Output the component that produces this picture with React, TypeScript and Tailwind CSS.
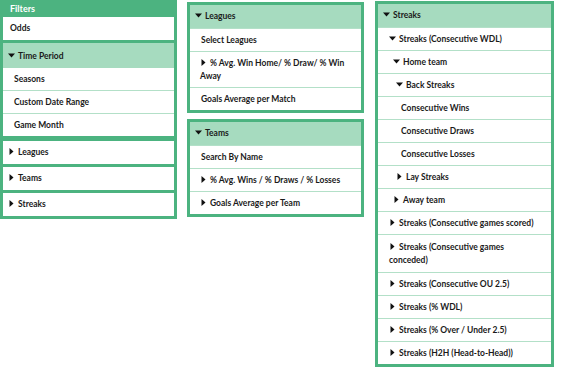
import type { ReactNode } from 'react';

function Arrow({ open }: { open: boolean }) {
  return (
    <span className="inline-block w-[7px] mr-[3px] align-middle relative -top-[1px]">
      {open ? (
        <svg width="7" height="5" viewBox="0 0 7 5" className="block">
          <polygon points="0,0.5 7,0.5 3.5,4.5" fill="#111" />
        </svg>
      ) : (
        <svg width="7" height="7" viewBox="0 0 7 7" className="block">
          <polygon points="1.5,0 5.5,3.5 1.5,7" fill="#111" />
        </svg>
      )}
    </span>
  );
}

type Item = { label: string; pl: string; arrow?: 'open' | 'closed'; tall?: boolean };

function Row({ item, first }: { item: Item; first?: boolean }) {
  return (
    <div
      className={
        (first ? '' : 'border-t border-[#b3e0c8] ') +
        (item.tall ? 'pt-[6px] pb-[5px] ' : 'pt-[5px] pb-[4px] ') +
        'bg-white pr-[11px] leading-[13px] ' +
        item.pl
      }
    >
      {item.arrow && <Arrow open={item.arrow === 'open'} />}
      {item.label}
    </div>
  );
}

function Box({ title, items, className }: { title: string; items: Item[]; className?: string }) {
  return (
    <div className={'border-[3px] border-[#4cb380] ' + (className ?? '')}>
      <div className="bg-[#a6dbbf] pl-[5px] pt-[5px] pb-[5px] leading-[13px]">
        <Arrow open />
        {title}
      </div>
      {items.map((it) => (
        <Row key={it.label} item={it} />
      ))}
    </div>
  );
}

const leagues: Item[] = [
  { label: 'Select Leagues', pl: 'pl-[11px]' },
  { label: '% Avg. Win Home/ % Draw/ % Win Away', pl: 'pl-[10px]', arrow: 'closed' },
  { label: 'Goals Average per Match', pl: 'pl-[11px]' },
];

const teams: Item[] = [
  { label: 'Search By Name', pl: 'pl-[11px]' },
  { label: '% Avg. Wins / % Draws / % Losses', pl: 'pl-[10px]', arrow: 'closed' },
  { label: 'Goals Average per Team', pl: 'pl-[10px]', arrow: 'closed' },
];

const streaks: Item[] = [
  { label: 'Streaks (Consecutive WDL)', pl: 'pl-[11px]', arrow: 'open' },
  { label: 'Home team', pl: 'pl-[15px]', arrow: 'open' },
  { label: 'Back Streaks', pl: 'pl-[18px]', arrow: 'open' },
  { label: 'Consecutive Wins', pl: 'pl-[23px]' },
  { label: 'Consecutive Draws', pl: 'pl-[23px]' },
  { label: 'Consecutive Losses', pl: 'pl-[23px]' },
  { label: 'Lay Streaks', pl: 'pl-[18px]', arrow: 'closed' },
  { label: 'Away team', pl: 'pl-[15px]', arrow: 'closed' },
  { label: 'Streaks (Consecutive games scored)', pl: 'pl-[11px]', arrow: 'closed' },
  { label: 'Streaks (Consecutive games conceded)', pl: 'pl-[11px]', arrow: 'closed', tall: true },
  { label: 'Streaks (Consecutive OU 2.5)', pl: 'pl-[11px]', arrow: 'closed' },
  { label: 'Streaks (% WDL)', pl: 'pl-[11px]', arrow: 'closed' },
  { label: 'Streaks (% Over / Under 2.5)', pl: 'pl-[11px]', arrow: 'closed' },
  { label: 'Streaks (H2H (Head-to-Head))', pl: 'pl-[11px]', arrow: 'closed' },
];

function Toggle({ children, mt }: { children: ReactNode; mt: string }) {
  return (
    <div className={'bg-white pl-[5px] pt-[5px] pb-[5px] leading-[13px] ' + mt}>
      <Arrow open={false} />
      {children}
    </div>
  );
}

export default function App() {
  return (
    <div className="w-[567px] h-[381px] bg-white flex items-start font-['Lato',sans-serif] font-bold text-[8.5px] text-[#1a1a1a]">
      <div className="w-[177px] bg-[#4cb380] px-[3px] pb-[3px] flex flex-col">
        <div className="h-[17px] leading-[17px] pl-[7px] text-white text-[9px]">Filters</div>
        <div className="bg-white pl-[7px] pt-[5px] pb-[5px] leading-[13px]">Odds</div>
        <div className="mt-[3px]">
          <div className="bg-[#a6dbbf] pl-[5px] pt-[7px] pb-[5px] leading-[13px]">
            <Arrow open />
            Time Period
          </div>
          <Row item={{ label: 'Seasons', pl: 'pl-[11px]' }} first />
          <Row item={{ label: 'Custom Date Range', pl: 'pl-[11px]' }} />
          <Row item={{ label: 'Game Month', pl: 'pl-[11px]' }} />
        </div>
        <Toggle mt="mt-[5px]">Leagues</Toggle>
        <Toggle mt="mt-[3px]">Teams</Toggle>
        <Toggle mt="mt-[3px]">Streaks</Toggle>
      </div>

      <div className="w-[177px] ml-[10px] mt-[2px] flex flex-col">
        <Box title="Leagues" items={leagues} />
        <Box title="Teams" items={teams} className="mt-[6px]" />
      </div>

      <div className="w-[179px] ml-[11px] mt-[1px]">
        <Box title="Streaks" items={streaks} />
      </div>
    </div>
  );
}
